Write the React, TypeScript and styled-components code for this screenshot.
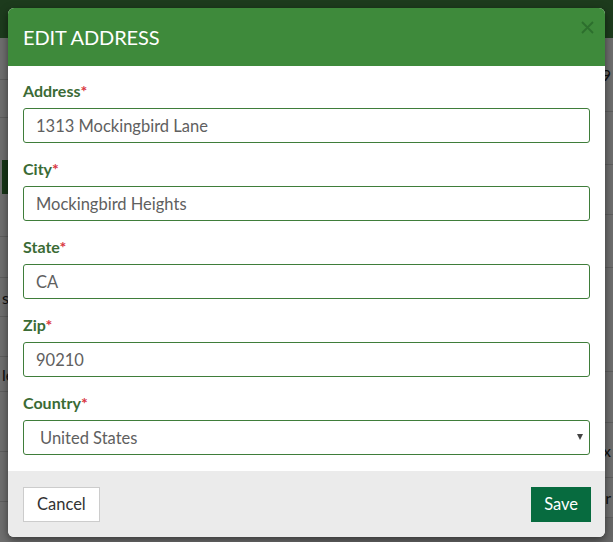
import styled, { createGlobalStyle } from "styled-components";

const GlobalStyle = createGlobalStyle`
  html, body {
    margin: 0;
    padding: 0;
    width: 613px;
    height: 542px;
    overflow: hidden;
    font-family: Lato, "Open Sans", "Liberation Sans", sans-serif;
  }
  * {
    box-sizing: border-box;
  }
`;

const Screen = styled.div`
  position: relative;
  width: 613px;
  height: 542px;
  overflow: hidden;
  background: #dedede;
`;

const TopBar = styled.div`
  height: 38px;
  background: #3b773b;
`;

const PageBody = styled.div`
  display: flex;
  height: 504px;
`;

const Column = styled.div<{ grow?: boolean }>`
  display: flex;
  flex-direction: column;
  flex: ${(p) => (p.grow ? "1" : "0 0 300px")};
  font-size: 16px;
  color: #222;
`;

const Row = styled.div<{ h: number; align?: "left" | "right" }>`
  display: flex;
  align-items: center;
  justify-content: ${(p) => (p.align === "right" ? "flex-end" : "flex-start")};
  height: ${(p) => p.h}px;
  border-bottom: 1px solid #bdbdbd;
  padding: 0 2px;
  position: relative;
`;

const GreenTab = styled.div`
  width: 20px;
  height: 34px;
  background: #2f6a2f;
  color: #fff;
  display: flex;
  align-items: center;
  justify-content: flex-end;
  padding-right: 2px;
  font-size: 15px;
`;

const BottomStrip = styled.div`
  flex: 1;
  background: #d0d0d0;
`;

const Backdrop = styled.div`
  position: absolute;
  inset: 0;
  background: rgba(0, 0, 0, 0.5);
`;

const Modal = styled.div`
  position: absolute;
  left: 8px;
  top: 8px;
  width: 597px;
  height: 529px;
  background: #fff;
  border-radius: 6px;
  overflow: hidden;
  box-shadow: 0 3px 9px rgba(0, 0, 0, 0.5);
  display: flex;
  flex-direction: column;
`;

const Header = styled.div`
  position: relative;
  height: 58px;
  background: #3e8a3b;
  display: flex;
  align-items: center;
  padding: 0 15px;
  flex: none;
`;

const Title = styled.h4`
  margin: 0;
  color: #fff;
  font-weight: 400;
  font-size: 20px;
  letter-spacing: -0.1px;
`;

const CloseButton = styled.button`
  position: absolute;
  right: 11px;
  top: 13px;
  width: 13px;
  height: 13px;
  padding: 0;
  border: 0;
  background: none;
  opacity: 0.55;
  cursor: pointer;
  display: flex;
`;

const Body = styled.div`
  flex: 1;
  padding: 15px 15px 0;
`;

const Field = styled.div`
  margin-bottom: 16px;
`;

const Label = styled.label`
  display: block;
  height: 20px;
  line-height: 20px;
  margin-bottom: 7px;
  font-size: 16px;
  font-weight: 700;
  color: #3b6b35;
`;

const Required = styled.span`
  color: #d9363e;
`;

const Input = styled.input`
  display: block;
  width: 100%;
  height: 35px;
  border: 1px solid #3f7d3a;
  border-radius: 3px;
  padding: 0 12px;
  font-family: inherit;
  font-size: 16.5px;
  color: #606060;
  outline: none;
`;

const SelectWrap = styled.div`
  position: relative;
  height: 35px;
  border: 1px solid #3f7d3a;
  border-radius: 3px;
  display: flex;
  align-items: center;
  padding: 0 16px;
  font-size: 16.5px;
  color: #606060;
`;

const Caret = styled.span`
  position: absolute;
  right: 6px;
  top: 13px;
  width: 0;
  height: 0;
  border-left: 3px solid transparent;
  border-right: 3px solid transparent;
  border-top: 6px solid #444;
`;

const Footer = styled.div`
  flex: none;
  height: 66px;
  background: #ebebeb;
  display: flex;
  align-items: center;
  justify-content: space-between;
  padding: 0 14px 0 15px;
`;

const Button = styled.button<{ primary?: boolean }>`
  height: 35px;
  padding: 0 ${(p) => (p.primary ? "12px" : "13px")};
  font-family: inherit;
  font-size: 16.5px;
  border-radius: 0;
  border: 1px solid ${(p) => (p.primary ? "#076b3f" : "#cccccc")};
  background: ${(p) => (p.primary ? "#076b3f" : "#fff")};
  color: ${(p) => (p.primary ? "#fff" : "#333")};
  cursor: pointer;
`;

const leftRows = [42, 38, 119, 41, 39, 40, 35, 60, 50];
const rightRows = [74, 53, 50, 53, 104, 51, 55, 40];

const fields = [
  { label: "Address", value: "1313 Mockingbird Lane" },
  { label: "City", value: "Mockingbird Heights" },
  { label: "State", value: "CA" },
  { label: "Zip", value: "90210" },
];

export default function App() {
  return (
    <>
      <GlobalStyle />
      <Screen>
        <TopBar />
        <PageBody>
          <Column>
            {leftRows.map((h, i) => (
              <Row key={i} h={h}>
                {i === 2 && <GreenTab>v</GreenTab>}
                {i === 4 && "s"}
                {i === 6 && "le"}
              </Row>
            ))}
          </Column>
          <Column grow>
            {rightRows.map((h, i) => (
              <Row key={i} h={h} align="right">
                {i === 0 && "9"}
                {i === 6 && "x"}
                {i === 7 && "r"}
              </Row>
            ))}
            <BottomStrip />
          </Column>
        </PageBody>
        <Backdrop />
        <Modal>
          <Header>
            <Title>EDIT ADDRESS</Title>
            <CloseButton aria-label="Close">
              <svg width="13" height="13" viewBox="0 0 13 13">
                <path
                  d="M1 1L12 12M12 1L1 12"
                  stroke="#1f5a22"
                  strokeWidth="1.8"
                />
              </svg>
            </CloseButton>
          </Header>
          <Body>
            {fields.map((f) => (
              <Field key={f.label}>
                <Label>
                  {f.label}
                  <Required>*</Required>
                </Label>
                <Input defaultValue={f.value} />
              </Field>
            ))}
            <Field>
              <Label>
                Country<Required>*</Required>
              </Label>
              <SelectWrap>
                United States
                <Caret />
              </SelectWrap>
            </Field>
          </Body>
          <Footer>
            <Button>Cancel</Button>
            <Button primary>Save</Button>
          </Footer>
        </Modal>
      </Screen>
    </>
  );
}
